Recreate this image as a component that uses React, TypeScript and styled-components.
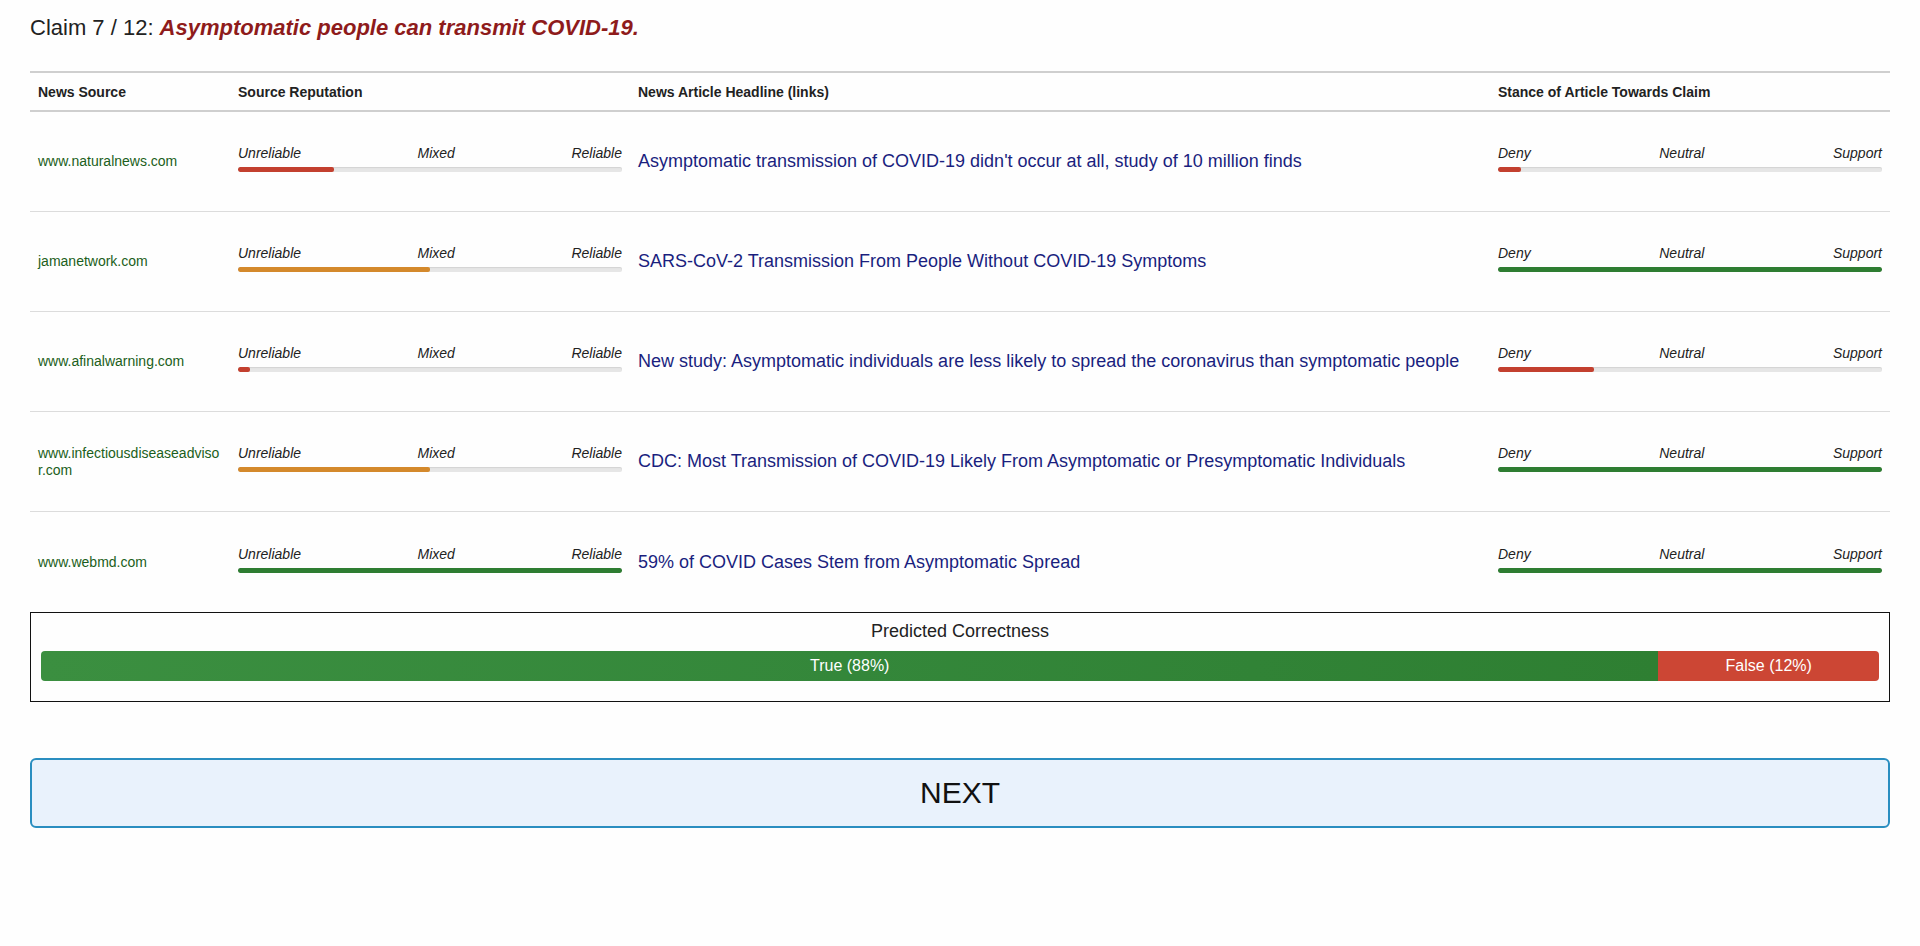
import React from "react";
import styled, { createGlobalStyle } from "styled-components";

const GlobalStyle = createGlobalStyle`
  html, body {
    margin: 0;
    padding: 0;
    background: #fefefe;
  }
  body {
    font-family: "Liberation Sans", Arial, sans-serif;
    color: #222;
  }
`;

const Page = styled.div`
  padding: 15px 30px 40px;
`;

const Title = styled.h1`
  margin: 0 0 30px;
  font-size: 22px;
  line-height: 26px;
  font-weight: normal;
  color: #222;
`;

const ClaimText = styled.span`
  color: #8e1b1b;
  font-weight: bold;
  font-style: italic;
`;

const Table = styled.div`
  border-top: 2px solid #cfcfcf;
`;

const cols = "200px 400px 1fr 400px";

const HeaderRow = styled.div`
  display: grid;
  grid-template-columns: ${cols};
  height: 37px;
  align-items: center;
  border-bottom: 2px solid #cfcfcf;
  box-sizing: content-box;
`;

const HeaderCell = styled.div`
  padding: 0 8px;
  font-size: 14px;
  font-weight: bold;
  color: #222;
`;

const Row = styled.div<{ $last?: boolean }>`
  display: grid;
  grid-template-columns: ${cols};
  height: 100px;
  box-sizing: border-box;
  align-items: center;
  border-bottom: ${(p) => (p.$last ? "none" : "1px solid #dcdcdc")};
`;

const Cell = styled.div`
  padding: 0 8px;
  min-width: 0;
`;

const Source = styled.div`
  font-size: 14px;
  line-height: 17px;
  color: #1b5e20;
  word-break: break-all;
`;

const Headline = styled.a`
  font-size: 18px;
  color: #1a1f7e;
  text-decoration: none;
`;

const Scale = styled.div`
  display: flex;
  flex-direction: column;
  gap: 5px;
  padding-bottom: 6px;
`;

const Labels = styled.div`
  display: flex;
  justify-content: space-between;
  font-size: 14px;
  font-style: italic;
  color: #222;
  line-height: 17px;
`;

const Track = styled.div`
  height: 5px;
  background: #e6e6e6;
  border-radius: 2px;
  box-shadow: inset 0 1px 1px rgba(0, 0, 0, 0.08);
  overflow: hidden;
`;

const Fill = styled.div<{ $color: string }>`
  height: 100%;
  background: ${(p) => p.$color};
  border-radius: 2px;
`;

const PredBox = styled.div`
  border: 1px solid #111;
  padding: 7px 10px 19px;
  height: 90px;
  box-sizing: border-box;
`;

const PredTitle = styled.div`
  text-align: center;
  font-size: 18px;
  line-height: 22px;
  color: #222;
  margin-bottom: 9px;
`;

const PredBar = styled.div`
  display: flex;
  height: 30px;
  border-radius: 4px;
  overflow: hidden;
`;

const Segment = styled.div<{ $kind: "true" | "false" }>`
  display: flex;
  align-items: center;
  justify-content: center;
  color: #fff;
  font-size: 16px;
  background: ${(p) =>
    p.$kind === "true"
      ? "linear-gradient(90deg, #3b8f40 0%, #34873a 50%, #2e7f32 100%)"
      : "#cc4634"};
`;

const NextButton = styled.button`
  display: block;
  width: 100%;
  margin-top: 56px;
  height: 70px;
  border: 2px solid #2a8ec0;
  border-radius: 6px;
  background: #e9f2fc;
  font-family: "Liberation Sans", Arial, sans-serif;
  font-size: 30px;
  color: #111;
  cursor: pointer;
`;

const RED = "#c3402f";
const ORANGE = "#d4892c";
const GREEN = "#2e7d32";

type Item = {
  source: string;
  rep: number;
  repColor: string;
  headline: string;
  stance: number;
  stanceColor: string;
};

const items: Item[] = [
  {
    source: "www.naturalnews.com",
    rep: 25,
    repColor: RED,
    headline:
      "Asymptomatic transmission of COVID-19 didn't occur at all, study of 10 million finds",
    stance: 6,
    stanceColor: RED,
  },
  {
    source: "jamanetwork.com",
    rep: 50,
    repColor: ORANGE,
    headline: "SARS-CoV-2 Transmission From People Without COVID-19 Symptoms",
    stance: 100,
    stanceColor: GREEN,
  },
  {
    source: "www.afinalwarning.com",
    rep: 3,
    repColor: RED,
    headline:
      "New study: Asymptomatic individuals are less likely to spread the coronavirus than symptomatic people",
    stance: 25,
    stanceColor: RED,
  },
  {
    source: "www.infectiousdiseaseadvisor.com",
    rep: 50,
    repColor: ORANGE,
    headline:
      "CDC: Most Transmission of COVID-19 Likely From Asymptomatic or Presymptomatic Individuals",
    stance: 100,
    stanceColor: GREEN,
  },
  {
    source: "www.webmd.com",
    rep: 100,
    repColor: GREEN,
    headline: "59% of COVID Cases Stem from Asymptomatic Spread",
    stance: 100,
    stanceColor: GREEN,
  },
];

function ScaleBar({
  labels,
  value,
  color,
}: {
  labels: [string, string, string];
  value: number;
  color: string;
}) {
  return (
    <Scale>
      <Labels>
        <span>{labels[0]}</span>
        <span>{labels[1]}</span>
        <span>{labels[2]}</span>
      </Labels>
      <Track>
        <Fill $color={color} style={{ width: `${value}%` }} />
      </Track>
    </Scale>
  );
}

export default function App() {
  return (
    <>
      <GlobalStyle />
      <Page>
        <Title>
          Claim 7 / 12: <ClaimText>Asymptomatic people can transmit COVID-19.</ClaimText>
        </Title>
        <Table>
          <HeaderRow>
            <HeaderCell>News Source</HeaderCell>
            <HeaderCell>Source Reputation</HeaderCell>
            <HeaderCell>News Article Headline (links)</HeaderCell>
            <HeaderCell>Stance of Article Towards Claim</HeaderCell>
          </HeaderRow>
          {items.map((it, i) => (
            <Row key={it.source} $last={i === items.length - 1}>
              <Cell>
                <Source>{it.source}</Source>
              </Cell>
              <Cell>
                <ScaleBar
                  labels={["Unreliable", "Mixed", "Reliable"]}
                  value={it.rep}
                  color={it.repColor}
                />
              </Cell>
              <Cell>
                <Headline href="#">{it.headline}</Headline>
              </Cell>
              <Cell>
                <ScaleBar
                  labels={["Deny", "Neutral", "Support"]}
                  value={it.stance}
                  color={it.stanceColor}
                />
              </Cell>
            </Row>
          ))}
        </Table>
        <PredBox>
          <PredTitle>Predicted Correctness</PredTitle>
          <PredBar>
            <Segment $kind="true" style={{ width: "88%" }}>
              True (88%)
            </Segment>
            <Segment $kind="false" style={{ width: "12%" }}>
              False (12%)
            </Segment>
          </PredBar>
        </PredBox>
        <NextButton>NEXT</NextButton>
      </Page>
    </>
  );
}
